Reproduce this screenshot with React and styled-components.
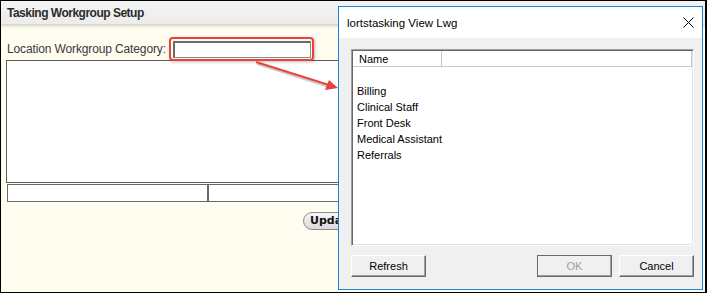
import React from "react"
import styled, { createGlobalStyle } from "styled-components"

const Global = createGlobalStyle`
  html, body { margin: 0; padding: 0; background: #fff; }
  * { box-sizing: border-box; }
`

const Frame = styled.div`
  position: relative;
  width: 707px;
  height: 293px;
  border: 1px solid #000;
  border-right-width: 2px;
  overflow: hidden;
  background: #fffcf0;
  font-family: "Liberation Sans", Arial, sans-serif;
`

const Header = styled.div`
  height: 23px;
  background: linear-gradient(#f3f3f3, #ececec);
  box-shadow: 0 2px 3px rgba(0, 0, 0, 0.18);
  display: flex;
  align-items: center;
  padding-left: 6px;
  font-size: 12px;
  font-weight: 700;
  letter-spacing: -0.5px;
  color: #2b2b2b;
  position: relative;
`

const Content = styled.div`
  padding: 13px 0 0 5px;
`

const FieldRow = styled.div`
  display: flex;
  align-items: center;
  gap: 3px;
  margin-left: 1px;
`

const Label = styled.span`
  font-size: 12px;
  letter-spacing: -0.13px;
  color: #3a3a3a;
`

const Highlight = styled.div`
  border: 2px solid #e8423f;
  border-radius: 4px;
  padding: 2px 1px 1px 2px;
  margin-bottom: -1px;
  box-shadow: 1px 1px 3px rgba(0, 0, 0, 0.25);
  position: relative;
  z-index: 2;
`

const Input = styled.div`
  width: 138px;
  height: 17px;
  background: #fff;
  border: 1px solid #8a8a8a;
  border-top: 2px solid #6a6a6a;
  border-left: 2px solid #6a6a6a;
`

const Grid = styled.div`
  height: 123px;
  margin-right: 2px;
  background: #fff;
  border: 1px solid #5e5e58;
`

const FooterRow = styled.div`
  display: flex;
  margin: 1px 2px 0 1px;
`

const Cell = styled.div`
  height: 18px;
  width: ${p => p.$w || "auto"};
  flex: ${p => (p.$w ? "none" : 1)};
  background: #fff;
  border: 1px solid #6a6a64;
`

const Actions = styled.div`
  padding: 8px 0 0 297px;
`

const PillButton = styled.button`
  height: 18px;
  padding: 0 8px 0 6px;
  border: 1px solid #8c8c8c;
  border-radius: 9px;
  background: linear-gradient(#f7f7f7, #d9d9d9);
  font-family: "DejaVu Sans", Verdana, sans-serif;
  font-size: 11px;
  font-weight: 700;
  color: #111;
`

const Arrow = styled.svg`
  position: absolute;
  left: 250px;
  top: 56px;
  overflow: visible;
  z-index: 3;
`

const Dialog = styled.div`
  position: absolute;
  left: 337px;
  top: 5px;
  width: 365px;
  height: 284px;
  border: 1px solid #1a84d8;
  background: #f0f0f0;
  display: flex;
  flex-direction: column;
  z-index: 4;
  font-family: "Liberation Sans", Arial, sans-serif;
`

const TitleBar = styled.div`
  height: 31px;
  background: #fff;
  display: flex;
  align-items: center;
  justify-content: space-between;
  padding: 0 8px 0 8px;
  font-size: 11.5px;
  color: #000;
`

const Body = styled.div`
  flex: 1;
  padding: 11px 8px 0 12px;
  display: flex;
  flex-direction: column;
`

const ListBox = styled.div`
  height: 197px;
  background: #fff;
  border-top: 1px solid #a0a0a0;
  border-left: 1px solid #a0a0a0;
  border-right: 1px solid #fff;
  border-bottom: 1px solid #fff;
  box-shadow: inset 1px 1px 0 #696969, inset -1px -1px 0 #e3e3e3;
  padding: 1px;
  font-size: 11px;
  color: #000;
`

const ListHeader = styled.div`
  display: flex;
  height: 16px;
  border-bottom: 1px solid #c8c8c8;
`

const Column = styled.div`
  width: ${p => p.$w || "auto"};
  flex: ${p => (p.$w ? "none" : 1)};
  border-right: 1px solid #c8c8c8;
  padding-left: 6px;
  display: flex;
  align-items: center;
`

const Items = styled.div`
  padding: 16px 0 0 4px;
`

const Item = styled.div`
  height: 16px;
  line-height: 16px;
`

const ButtonRow = styled.div`
  display: flex;
  justify-content: space-between;
  margin-top: 9px;
`

const Group = styled.div`
  display: flex;
  gap: 7px;
`

const WinButton = styled.button`
  width: 75px;
  height: 22px;
  padding: 0;
  background: #f0f0f0;
  font-family: "Liberation Sans", Arial, sans-serif;
  font-size: 11px;
  color: ${p => (p.disabled ? "#a0a0a0" : "#000")};
  border: 1px solid;
  border-color: #fff #696969 #696969 #fff;
  box-shadow: inset -1px -1px 0 #a0a0a0;
  outline: ${p => (p.$default ? "1px solid #6a6a6a" : "none")};
  outline-offset: -1px;
`

const Close = styled.svg`
  display: block;
`

const items = ["Billing", "Clinical Staff", "Front Desk", "Medical Assistant", "Referrals"]

const App = () => {
  return (
    <Frame>
      <Global />
      <Header>Tasking Workgroup Setup</Header>
      <Content>
        <FieldRow>
          <Label>Location Workgroup Category:</Label>
          <Highlight>
            <Input />
          </Highlight>
        </FieldRow>
        <Grid />
        <FooterRow>
          <Cell $w="201px" />
          <Cell />
        </FooterRow>
        <Actions>
          <PillButton>Update</PillButton>
        </Actions>
      </Content>

      <Arrow width="90" height="40" viewBox="0 0 90 40">
        <line x1="5" y1="5" x2="80" y2="29" stroke="rgba(0,0,0,0.2)" strokeWidth="2" transform="translate(1,2)" />
        <line x1="5" y1="5" x2="78" y2="28" stroke="#e8423f" strokeWidth="2" />
        <polygon points="87,31 74,33 78,23" fill="#e8423f" />
      </Arrow>

      <Dialog>
        <TitleBar>
          <span>lortstasking View Lwg</span>
          <Close width="11" height="11" viewBox="0 0 11 11">
            <path d="M0.5 0.5 L10.5 10.5 M10.5 0.5 L0.5 10.5" stroke="#000" strokeWidth="1" />
          </Close>
        </TitleBar>
        <Body>
          <ListBox>
            <ListHeader>
              <Column $w="89px">Name</Column>
              <Column />
            </ListHeader>
            <Items>
              {items.map(i => (
                <Item key={i}>{i}</Item>
              ))}
            </Items>
          </ListBox>
          <ButtonRow>
            <WinButton>Refresh</WinButton>
            <Group>
              <WinButton disabled $default>OK</WinButton>
              <WinButton>Cancel</WinButton>
            </Group>
          </ButtonRow>
        </Body>
      </Dialog>
    </Frame>
  )
}

export default App
